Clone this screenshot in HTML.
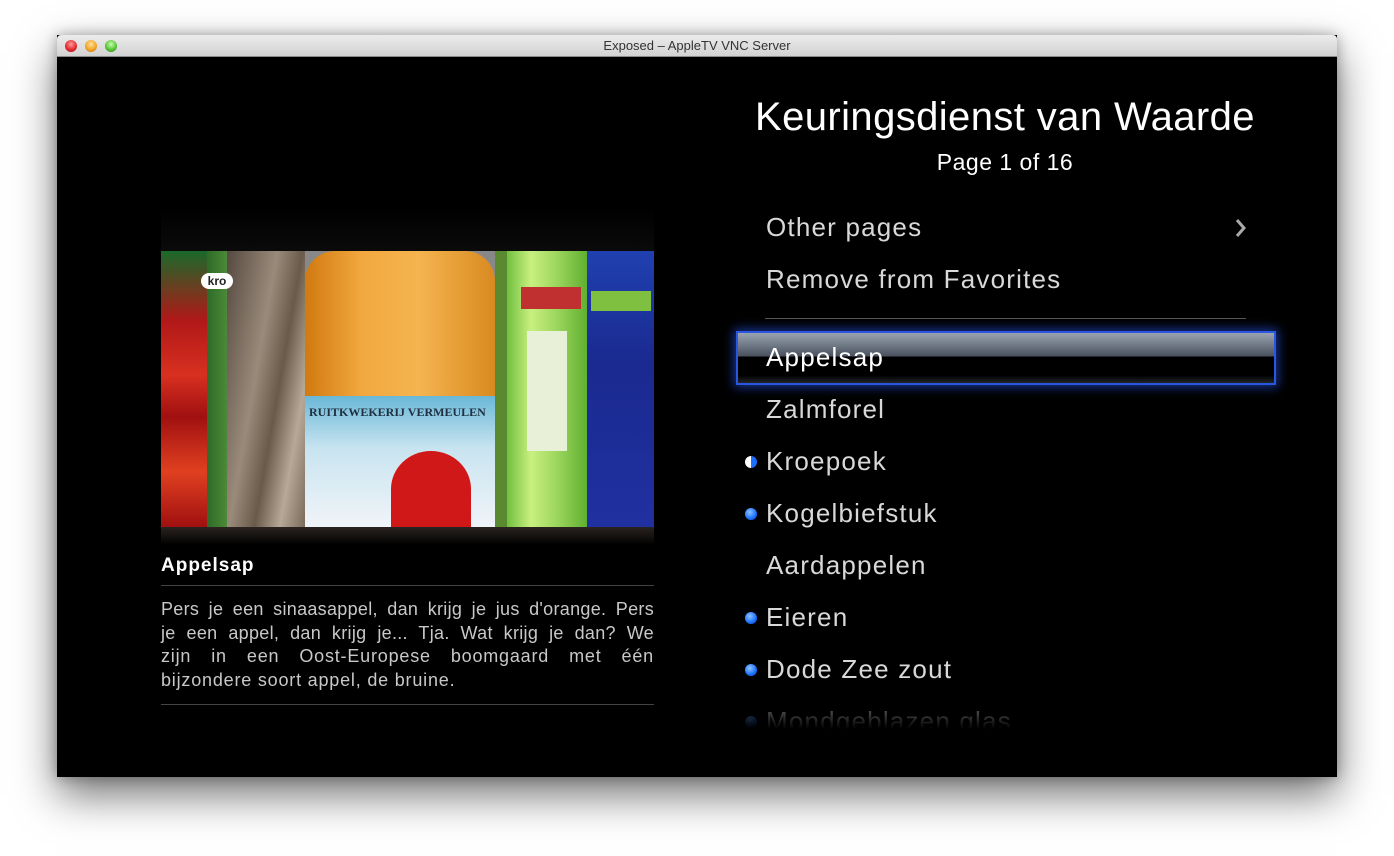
<!DOCTYPE html>
<html><head><meta charset="utf-8"><style>
*{margin:0;padding:0;box-sizing:border-box}
body{width:1394px;height:856px;background:#fff;position:relative;overflow:hidden;font-family:"Liberation Sans",sans-serif}
.win{position:absolute;left:57px;top:35px;width:1280px;height:742px;box-shadow:0 18px 40px rgba(0,0,0,.55),0 0 12px rgba(0,0,0,.3);background:#000}
.tb{position:absolute;left:0;top:0;width:1280px;height:22px;background:linear-gradient(#ececec,#d2d2d2);border-bottom:1px solid #8a8a8a;border-radius:4px 4px 0 0;text-align:center;font-size:13px;line-height:22px;color:#333}
.dot{position:absolute;top:5px;width:12px;height:12px;border-radius:50%}
.c{position:absolute;left:0;top:22px;width:1280px;height:720px;background:#000;color:#ddd}
.a{position:absolute}
.item{position:absolute;left:709px;font-size:26px;color:#d8d8d8;line-height:30px;letter-spacing:1.2px;white-space:nowrap}
.b{position:absolute;left:688px;width:12px;height:12px;border-radius:50%;background:radial-gradient(circle at 40% 35%,#8cc4ff,#1a6fff 60%,#0a4fd0)}
.j{display:block;text-align:justify;text-align-last:justify;white-space:nowrap}
</style></head><body>
<div class="win">
<div class="tb">Exposed – AppleTV VNC Server
<div class="dot" style="left:8px;background:radial-gradient(circle at 50% 35%,#ff9a9a,#e0242a 60%,#a01018)"></div>
<div class="dot" style="left:28px;background:radial-gradient(circle at 50% 35%,#ffe39a,#f0a020 60%,#b07010)"></div>
<div class="dot" style="left:48px;background:radial-gradient(circle at 50% 35%,#c8ffb0,#52c030 60%,#2a8018)"></div>
</div>
<div class="c">
<div class="a" style="left:104px;top:150px;width:493px;height:44px;background:linear-gradient(#000,#0a0a0a)"></div>
<div class="a" style="left:104px;top:194px;width:493px;height:276px;overflow:hidden;background:#888">
 <div class="a" style="left:0;top:0;width:46px;height:276px;background:linear-gradient(#1a6a2a,#b01818 25%,#d83020 45%,#a01010 60%,#e04020 80%,#a01010)"></div>
 <div class="a" style="left:46px;top:0;width:20px;height:276px;background:linear-gradient(90deg,#2f6a28,#4a8a38)"></div>
 <div class="a" style="left:66px;top:0;width:78px;height:276px;background:linear-gradient(100deg,#554a40,#9a8a7a 40%,#6a5a4a 60%,#b8a898 80%,#7a6a5a)"></div>
 <div class="a" style="left:144px;top:0;width:190px;height:276px;border-radius:30px 30px 0 0;background:linear-gradient(90deg,#d07a10,#f2a840 30%,#f5b450 60%,#d88a20)"></div>
 <div class="a" style="left:144px;top:145px;width:190px;height:131px;background:linear-gradient(#6ab8d8,#c8e4f0 40%,#f0f4f8)"></div>
 <div class="a" style="left:230px;top:200px;width:80px;height:76px;border-radius:50% 50% 0 0;background:#d01818"></div>
 <div class="a" style="left:148px;top:154px;font:bold 12px 'Liberation Serif',serif;color:#203040">RUITKWEKERIJ VERMEULEN</div>
 <div class="a" style="left:334px;top:0;width:12px;height:276px;background:#5a8a30"></div>
 <div class="a" style="left:346px;top:0;width:80px;height:276px;background:linear-gradient(90deg,#70c040,#c8f080 30%,#a0d860 60%,#60b030)"></div>
 <div class="a" style="left:360px;top:36px;width:60px;height:22px;background:#c03030"></div>
 <div class="a" style="left:366px;top:80px;width:40px;height:120px;background:#e8f0d8"></div>
 <div class="a" style="left:426px;top:0;width:67px;height:276px;background:linear-gradient(#2040b0,#1a2a90 40%,#2030a0)"></div>
 <div class="a" style="left:430px;top:40px;width:60px;height:20px;background:#80c040"></div>
 <div class="a" style="left:40px;top:22px;width:32px;height:16px;border-radius:8px;background:#fff;color:#222;font:bold 12px/16px 'Liberation Sans';text-align:center">kro</div>
</div>
<div class="a" style="left:104px;top:470px;width:493px;height:18px;background:linear-gradient(#2a2420,#000)"></div>
<div class="a" style="left:104px;top:498px;font-size:19px;font-weight:bold;color:#fff;letter-spacing:1px">Appelsap</div>
<div class="a" style="left:104px;top:528px;width:493px;height:1px;background:#444"></div>
<div class="a" style="left:104px;top:541px;width:493px;font-size:18px;line-height:23.5px;color:#c8c8c8;letter-spacing:.8px">
<span class="j" style="letter-spacing:.3px">Pers je een sinaasappel, dan krijg je jus d'orange. Pers</span>
<span class="j" style="letter-spacing:.3px">je een appel, dan krijg je... Tja. Wat krijg je dan? We</span>
<span class="j">zijn in een Oost-Europese boomgaard met één</span>
<span style="display:block">bijzondere soort appel, de bruine.</span>
</div>
<div class="a" style="left:104px;top:647px;width:493px;height:1px;background:#444"></div>
<div class="a" style="left:598px;top:38px;width:700px;text-align:center;font-size:40px;color:#fff;letter-spacing:.4px">Keuringsdienst van Waarde</div>
<div class="a" style="left:648px;top:92px;width:600px;text-align:center;font-size:23px;color:#fff;letter-spacing:.5px">Page 1 of 16</div>
<div class="item" style="top:155px">Other pages</div>
<svg class="a" style="left:1177px;top:160px" width="14" height="22"><path d="M3 3 L10 11 L3 19" stroke="#aaa" stroke-width="3" fill="none"/></svg>
<div class="item" style="top:207px">Remove from Favorites</div>
<div class="a" style="left:708px;top:261px;width:481px;height:1px;background:#555"></div>
<div class="a" style="left:679px;top:274px;width:540px;height:54px;border:2px solid #2a56e0;box-shadow:0 0 10px 2px rgba(40,90,255,.6);background:linear-gradient(#9aa4b0,#4a5260 46%,#000 48%,#000 85%,#20242a)"></div>
<div class="item" style="top:285px;color:#fff">Appelsap</div>
<div class="item" style="top:337px">Zalmforel</div>
<div class="b" style="top:399px;background:linear-gradient(90deg,#fff 50%,#1a6fff 50%)"></div>
<div class="item" style="top:389px">Kroepoek</div>
<div class="b" style="top:451px"></div>
<div class="item" style="top:441px">Kogelbiefstuk</div>
<div class="item" style="top:493px">Aardappelen</div>
<div class="b" style="top:555px"></div>
<div class="item" style="top:545px">Eieren</div>
<div class="b" style="top:607px"></div>
<div class="item" style="top:597px">Dode Zee zout</div>
<div class="a" style="left:685px;top:640px;width:320px;height:40px;-webkit-mask:linear-gradient(rgba(0,0,0,.6),transparent 80%);mask:linear-gradient(rgba(0,0,0,.6),transparent 80%)">
 <div class="b" style="left:3px;top:19px"></div>
 <div class="item" style="left:24px;top:9px">Mondgeblazen glas</div>
</div>
</div>
</div>
</body></html>
